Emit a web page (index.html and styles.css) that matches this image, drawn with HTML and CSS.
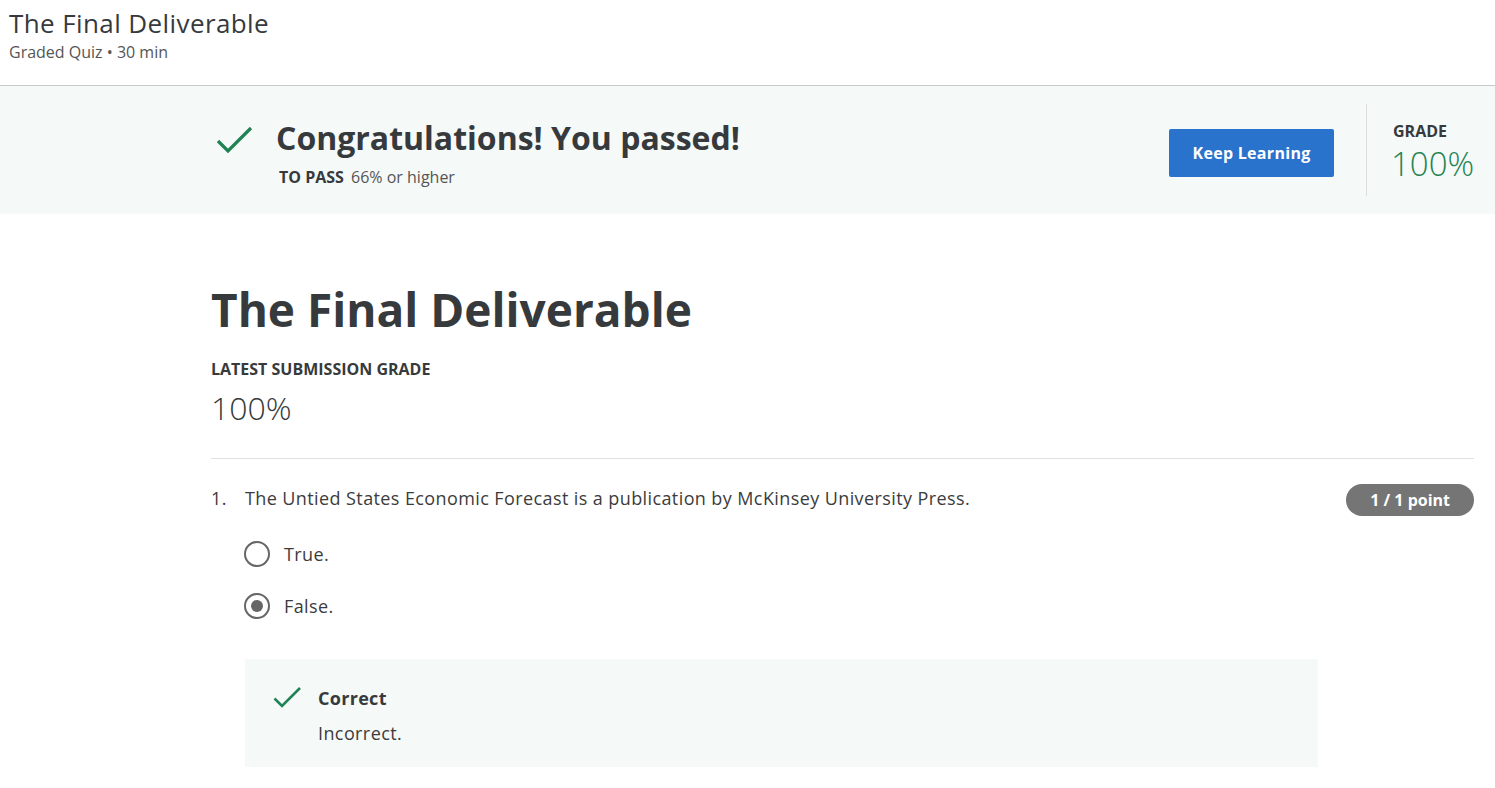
FILE: index.html
```html
<!DOCTYPE html>
<html lang="en">
<head>
<meta charset="utf-8">
<title>The Final Deliverable</title>
<link rel="stylesheet" href="styles.css">
</head>
<body>
<header class="top">
  <h1 class="top-title">The Final Deliverable</h1>
  <div class="top-sub">Graded Quiz • 30 min</div>
</header>
<section class="banner">
  <div class="banner-inner">
    <div class="pass">
      <svg class="pass-check" width="40" height="32" viewBox="0 0 40 32"><path d="M2 19 L12 29 L35 6" fill="none" stroke="#1f8354" stroke-width="3.2"/></svg>
      <div class="pass-text">
        <h2 class="pass-title">Congratulations! You passed!</h2>
        <div class="pass-req"><span class="label">TO PASS</span> 66% or higher</div>
      </div>
    </div>
    <button class="btn">Keep Learning</button>
    <div class="grade">
      <div class="label">GRADE</div>
      <div class="grade-val">100%</div>
    </div>
  </div>
</section>
<main class="content">
  <h1 class="title">The Final Deliverable</h1>
  <div class="label sub-label">LATEST SUBMISSION GRADE</div>
  <div class="sub-grade">100%</div>
  <hr class="rule">
  <div class="question">
    <div class="q-head">
      <span class="q-num">1.</span>
      <span class="q-text">The Untied States Economic Forecast is a publication by McKinsey University Press.</span>
      <span class="badge">1 / 1 point</span>
    </div>
    <div class="options">
      <div class="option"><span class="radio"></span><span>True.</span></div>
      <div class="option"><span class="radio checked"></span><span>False.</span></div>
    </div>
    <div class="feedback">
      <svg class="fb-check" width="30" height="24" viewBox="0 0 30 24"><path d="M1.5 13.5 L9 21 L27 3" fill="none" stroke="#1f8354" stroke-width="2.6"/></svg>
      <div>
        <div class="fb-title">Correct</div>
        <div class="fb-text">Incorrect.</div>
      </div>
    </div>
  </div>
</main>
</body>
</html>
```
FILE: styles.css
```css
* { box-sizing: border-box; }
body {
  margin: 0;
  font-family: "Open Sans", "Noto Sans", sans-serif;
  color: #373a3c;
  background: #fff;
}
.top {
  padding: 6px 9px 0;
  height: 86px;
  border-bottom: 1px solid #c8c8c8;
}
.top-title {
  margin: 0;
  font-size: 26px;
  font-weight: 400;
  line-height: 34px;
  letter-spacing: 0.4px;
}
.top-sub {
  font-size: 16px;
  line-height: 24px;
  color: #555;
  margin-top: 0;
}
.banner {
  background: #f5f9f8;
  height: 128px;
}
.banner-inner {
  display: flex;
  align-items: center;
  height: 100%;
  padding: 18px 21px 18px 216px;
}
.pass {
  display: flex;
  align-items: flex-start;
  flex: 1;
  margin-top: 4px;
}
.pass-check { margin-top: 6px; margin-right: 20px; flex: none; }
.pass-title {
  margin: 0;
  font-size: 32px;
  font-weight: 700;
  line-height: 44px;
}
.pass-req {
  font-size: 16px;
  line-height: 22px;
  color: #555;
  margin-top: 6px;
  padding-left: 3px;
}
.label {
  font-weight: 700;
  font-size: 16px;
  color: #373a3c;
  margin-right: 3px;
}
.btn {
  background: #2a73cc;
  color: #fff;
  border: 0;
  border-radius: 2px;
  font-family: inherit;
  font-weight: 700;
  font-size: 16px;
  letter-spacing: 0.3px;
  width: 165px;
  height: 48px;
  margin-right: 32px;
  margin-top: 6px;
}
.grade {
  align-self: stretch;
  border-left: 1px solid #ddd;
  padding-left: 26px;
  padding-top: 16px;
  width: 108px;
}
.grade .label { display: block; line-height: 22px; }
.grade-val {
  font-size: 33px;
  font-weight: 300;
  color: #1f8354;
  line-height: 36px;
  margin-top: 4px;
  margin-left: -2px;
}
.content {
  padding: 64px 21px 40px 211px;
}
.title {
  margin: 0;
  font-size: 46px;
  font-weight: 700;
  line-height: 62px;
}
.sub-label {
  display: block;
  margin-top: 18px;
  line-height: 22px;
}
.sub-grade {
  font-size: 32px;
  font-weight: 300;
  line-height: 44px;
  margin-top: 6px;
}
.rule {
  border: 0;
  border-top: 1px solid #e0e0e0;
  margin: 28px 0 0;
}
.question { padding-top: 25px; }
.q-head {
  display: flex;
  align-items: flex-start;
  font-size: 18px;
  letter-spacing: 0.4px;
  line-height: 32px;
  color: #3c3c3c;
}
.q-num { width: 34px; margin-top: -2px; }
.q-text { flex: 1; margin-top: -2px; }
.badge {
  background: #757575;
  color: #fff;
  font-weight: 700;
  font-size: 16px;
  letter-spacing: 0;
  border-radius: 16px;
  padding: 0 24px;
  height: 32px;
  line-height: 32px;
}
.options {
  padding-left: 33px;
  margin-top: 25px;
}
.option {
  display: flex;
  align-items: center;
  gap: 14px;
  font-size: 18px;
  letter-spacing: 0.4px;
  height: 26px;
  margin-bottom: 26px;
  color: #3c3c3c;
}
.radio {
  width: 26px;
  height: 26px;
  border: 2px solid #666;
  border-radius: 50%;
  display: inline-flex;
  align-items: center;
  justify-content: center;
}
.radio.checked::after {
  content: "";
  width: 12px;
  height: 12px;
  border-radius: 50%;
  background: #666;
}
.feedback {
  margin-left: 34px;
  width: 1073px;
  background: #f5f9f8;
  display: flex;
  align-items: flex-start;
  padding: 24px 28px 19px 28px;
  margin-top: 40px;
}
.fb-check { margin-top: 2px; margin-right: 15px; flex: none; }
.fb-title { font-weight: 700; font-size: 18px; line-height: 30px; letter-spacing: 0.3px; }
.fb-text { font-size: 18px; line-height: 30px; margin-top: 5px; color: #3c3c3c; letter-spacing: 0.4px; }
```
